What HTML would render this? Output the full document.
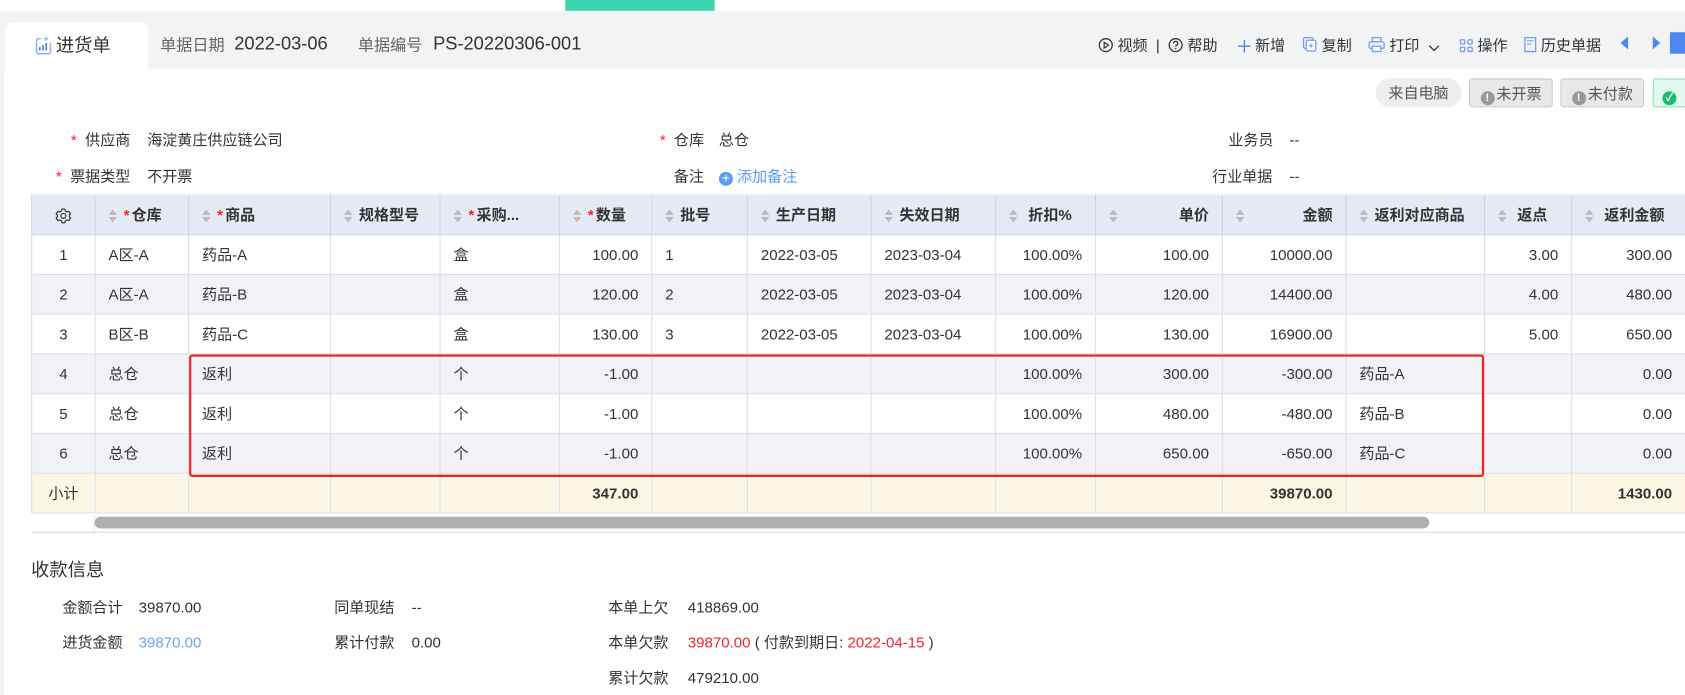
<!DOCTYPE html>
<html><head><meta charset="utf-8"><style>
html,body{margin:0;padding:0;width:1685px;height:695px;overflow:hidden;background:#fff}
#w{position:absolute;left:0;top:0;width:1568px;height:647px;transform:scale(1.07462,1.0742);transform-origin:0 0;font-family:"Liberation Sans","Noto Sans CJK SC",sans-serif;color:#333;font-size:14px;background:#fff;overflow:hidden}
.a{position:absolute;white-space:nowrap;line-height:20px}
.g{color:#666}
.r{color:#f5222d}
.tb{position:absolute;left:29px;top:181px;width:1539px;border-collapse:collapse;table-layout:fixed}
.tb td{border:1px solid #dcdfe6;border-top:none;border-bottom:1px solid #dcdfe6;height:36px;padding:0 12px;font-size:14px;overflow:hidden;white-space:nowrap;line-height:20px}
.tb tr.h td{background:#e6eaf4;height:37px;font-weight:bold;color:#333;border-color:#cfd3dc}
.tb tr.o td{background:#f0f2f7}
.tb tr.s td{background:#fcf6e4;font-weight:bold}
.R{text-align:right}
.C{text-align:center}
.ar{display:inline-block;width:8px;vertical-align:middle;margin-right:6px}
.ar:before{content:"";display:block;border:4px solid transparent;border-bottom:5px solid #bbb;border-top:none;margin-bottom:2px}
.ar:after{content:"";display:block;border:4px solid transparent;border-top:5px solid #bbb;border-bottom:none}
.st{color:#f5222d;margin-right:2px}
.tag{position:absolute;top:73px;height:27px;line-height:27px;font-size:14px;color:#555;box-sizing:border-box}
.ex{display:inline-block;width:13px;height:13px;border-radius:50%;background:#999;color:#fff;font-size:10px;line-height:13px;text-align:center;font-weight:bold;vertical-align:-2px;margin-right:2px}
.tl{color:#333;font-size:14px}
.ic{display:inline-block;vertical-align:-2px}
</style></head><body><div id="w">
<div class="a" style="left:0;top:10px;width:1568px;height:54px;background:#f2f3f5"></div>
<div class="a" style="left:0;top:64px;width:4px;height:583px;background:#f2f3f5"></div>
<div class="a" style="left:526px;top:0;width:139px;height:10px;background:#3dd6b0"></div>
<div class="a" style="left:5px;top:21px;width:133px;height:43px;background:#fff;border-radius:7px 7px 0 0"></div>
<svg class="a" style="left:33px;top:34px" width="15" height="17" viewBox="0 0 15 17"><path d="M5 2H3a2 2 0 0 0-2 2v10a2 2 0 0 0 2 2h9a2 2 0 0 0 2-2V6" fill="none" stroke="#8ab4f8" stroke-width="1.4"/><path d="M4 13v-3M7 13V8M10 13V6" stroke="#4d7ff0" stroke-width="1.6"/><path d="M10 0v4M8 2h4" stroke="#8ab4f8" stroke-width="1.2"/></svg>
<div class="a" style="left:52px;top:33px;font-size:17px">进货单</div>
<div class="a g" style="left:149px;top:33px;font-size:15px">单据日期</div>
<div class="a" style="left:218px;top:31px;font-size:17px">2022-03-06</div>
<div class="a g" style="left:333px;top:33px;font-size:15px">单据编号</div>
<div class="a" style="left:403px;top:31px;font-size:17px">PS-20220306-001</div>
<div class="a tl" style="left:1022px;top:32px"><svg class="ic" width="14" height="14" viewBox="0 0 14 14"><circle cx="7" cy="7" r="6" fill="none" stroke="#333" stroke-width="1.2"/><path d="M5.5 4.3v5.4L9.6 7z" fill="none" stroke="#333" stroke-width="1.1"/></svg> 视频 &nbsp;|&nbsp; <svg class="ic" width="14" height="14" viewBox="0 0 14 14"><circle cx="7" cy="7" r="6" fill="none" stroke="#333" stroke-width="1.2"/><path d="M5 5.5a2 2 0 1 1 2.6 1.9c-.5.2-.6.5-.6 1.1" fill="none" stroke="#333" stroke-width="1.1"/><circle cx="7" cy="10.3" r=".7" fill="#333"/></svg> 帮助</div>
<div class="a tl" style="left:1152px;top:32px"><svg class="ic" width="12" height="12" viewBox="0 0 12 12"><path d="M6 0v12M0 6h12" stroke="#4d88f0" stroke-width="1.3"/></svg> 新增</div>
<div class="a tl" style="left:1212px;top:32px"><svg class="ic" width="14" height="15" viewBox="0 0 14 15"><rect x="1" y="1" width="9" height="10" rx="1.5" fill="none" stroke="#6e9ef5" stroke-width="1.2"/><rect x="3.5" y="3.5" width="9" height="10" rx="1.5" fill="#fff" stroke="#6e9ef5" stroke-width="1.2"/><path d="M8 6.5v4M6 8.5h4" stroke="#6e9ef5" stroke-width="1.1"/></svg> 复制</div>
<div class="a tl" style="left:1273px;top:32px"><svg class="ic" width="16" height="15" viewBox="0 0 16 15"><rect x="4" y="1" width="8" height="4" fill="none" stroke="#6e9ef5" stroke-width="1.2"/><rect x="1" y="5" width="14" height="6" rx="1.5" fill="none" stroke="#6e9ef5" stroke-width="1.2"/><rect x="4" y="9" width="8" height="5" fill="#fff" stroke="#6e9ef5" stroke-width="1.2"/></svg> 打印 &nbsp;<svg class="ic" width="11" height="8" viewBox="0 0 11 8"><path d="M1 1.5l4.5 4.5L10 1.5" fill="none" stroke="#333" stroke-width="1.2"/></svg></div>
<div class="a tl" style="left:1358px;top:32px"><svg class="ic" width="13" height="13" viewBox="0 0 13 13"><g fill="none" stroke="#6e9ef5" stroke-width="1.2"><rect x="1" y="1" width="4" height="4" rx="1"/><rect x="8" y="1" width="4" height="4" rx="1"/><rect x="1" y="8" width="4" height="4" rx="1"/><rect x="8" y="8" width="4" height="4" rx="1"/></g></svg> 操作</div>
<div class="a tl" style="left:1418px;top:32px"><svg class="ic" width="12" height="15" viewBox="0 0 12 15"><path d="M1 1h10v13H1z" fill="none" stroke="#6e9ef5" stroke-width="1.2"/><path d="M3 4h6M3 7h4" stroke="#6e9ef5" stroke-width="1.1"/></svg> 历史单据</div>
<div class="a" style="left:1508px;top:34px;width:0;height:0;border:6px solid transparent;border-right:7px solid #4d88f0;border-left:none"></div>
<div class="a" style="left:1538px;top:34px;width:0;height:0;border:6px solid transparent;border-left:7px solid #4d88f0;border-right:none"></div>
<div class="a" style="left:1554px;top:30px;width:14px;height:20px;background:#4d88f0"></div>
<div class="tag" style="left:1280px;width:80px;background:#eee;border-radius:14px;text-align:center">来自电脑</div>
<div class="tag" style="left:1367px;width:78px;background:#e8e8e8;border:1px solid #ccc;border-radius:3px;text-align:center"><span class="ex">!</span>未开票</div>
<div class="tag" style="left:1452px;width:78px;background:#e8e8e8;border:1px solid #ccc;border-radius:3px;text-align:center"><span class="ex">!</span>未付款</div>
<div class="tag" style="left:1538px;width:60px;background:#e3f9ef;border:1px solid #8de0b8;border-radius:3px;padding-left:8px"><span class="ex" style="background:#19be6b">✓</span></div>
<div class="a" style="left:66px;top:120px"><span class="r">*</span>&nbsp; 供应商</div>
<div class="a" style="left:137px;top:120px">海淀黄庄供应链公司</div>
<div class="a" style="left:614px;top:120px"><span class="r">*</span>&nbsp; 仓库</div>
<div class="a" style="left:669px;top:120px">总仓</div>
<div class="a" style="left:1143px;top:120px">业务员</div>
<div class="a" style="left:1200px;top:120px">--</div>
<div class="a" style="left:52px;top:154px"><span class="r">*</span>&nbsp; 票据类型</div>
<div class="a" style="left:137px;top:154px">不开票</div>
<div class="a" style="left:627px;top:154px">备注</div>
<div class="a" style="left:669px;top:154px;color:#5b9bf0"><span style="display:inline-block;width:13px;height:13px;border-radius:50%;background:#5b9bf0;color:#fff;font-size:13px;line-height:12px;text-align:center;vertical-align:-1px">+</span> 添加备注</div>
<div class="a" style="left:1128px;top:154px">行业单据</div>
<div class="a" style="left:1200px;top:154px">--</div>

<table class="tb">
<colgroup><col style="width:59px"><col style="width:87px"><col style="width:132px"><col style="width:102px"><col style="width:111px"><col style="width:86px"><col style="width:89px"><col style="width:115px"><col style="width:116px"><col style="width:93px"><col style="width:118px"><col style="width:115px"><col style="width:129px"><col style="width:81px"><col style="width:106px"></colgroup>
<tr class="h"><td class="C"><svg width="16" height="16" viewBox="0 0 16 16" style="vertical-align:middle"><path d="M8 1.5l1.4.3.4 1.6 1.4.8 1.6-.5 1 1 .9 1.3-1.1 1.2v1.6l1.1 1.2-.9 1.3-1 1-1.6-.5-1.4.8-.4 1.6L8 14.5l-1.4-.3-.4-1.6-1.4-.8-1.6.5-1-1-.9-1.3 1.1-1.2V7.2L1.3 6l.9-1.3 1-1 1.6.5 1.4-.8.4-1.6z" fill="none" stroke="#333" stroke-width="1.1"/><circle cx="8" cy="8" r="2.3" fill="none" stroke="#333" stroke-width="1.1"/></svg></td><td><span class="ar"></span><span class="st">*</span>仓库</td><td><span class="ar"></span><span class="st">*</span>商品</td><td><span class="ar"></span>规格型号</td><td><span class="ar"></span><span class="st">*</span>采购...</td><td><span class="ar"></span><span class="st">*</span>数量</td><td><span class="ar"></span>批号</td><td><span class="ar"></span>生产日期</td><td><span class="ar"></span>失效日期</td><td><span class="ar"></span>&nbsp;折扣%</td><td><span class="ar"></span><span style="float:right">单价</span></td><td><span class="ar"></span><span style="float:right">金额</span></td><td><span class="ar"></span>返利对应商品</td><td><span class="ar"></span>&nbsp;返点</td><td><span class="ar"></span>&nbsp;返利金额</td></tr>
<tr><td class="C">1</td><td>A区-A</td><td>药品-A</td><td></td><td>盒</td><td class="R">100.00</td><td>1</td><td>2022-03-05</td><td>2023-03-04</td><td class="R">100.00%</td><td class="R">100.00</td><td class="R">10000.00</td><td></td><td class="R">3.00</td><td class="R">300.00</td></tr>
<tr class="o"><td class="C">2</td><td>A区-A</td><td>药品-B</td><td></td><td>盒</td><td class="R">120.00</td><td>2</td><td>2022-03-05</td><td>2023-03-04</td><td class="R">100.00%</td><td class="R">120.00</td><td class="R">14400.00</td><td></td><td class="R">4.00</td><td class="R">480.00</td></tr>
<tr><td class="C">3</td><td>B区-B</td><td>药品-C</td><td></td><td>盒</td><td class="R">130.00</td><td>3</td><td>2022-03-05</td><td>2023-03-04</td><td class="R">100.00%</td><td class="R">130.00</td><td class="R">16900.00</td><td></td><td class="R">5.00</td><td class="R">650.00</td></tr>
<tr class="o"><td class="C">4</td><td>总仓</td><td>返利</td><td></td><td>个</td><td class="R">-1.00</td><td></td><td></td><td></td><td class="R">100.00%</td><td class="R">300.00</td><td class="R">-300.00</td><td>药品-A</td><td></td><td class="R">0.00</td></tr>
<tr><td class="C">5</td><td>总仓</td><td>返利</td><td></td><td>个</td><td class="R">-1.00</td><td></td><td></td><td></td><td class="R">100.00%</td><td class="R">480.00</td><td class="R">-480.00</td><td>药品-B</td><td></td><td class="R">0.00</td></tr>
<tr class="o"><td class="C">6</td><td>总仓</td><td>返利</td><td></td><td>个</td><td class="R">-1.00</td><td></td><td></td><td></td><td class="R">100.00%</td><td class="R">650.00</td><td class="R">-650.00</td><td>药品-C</td><td></td><td class="R">0.00</td></tr>
<tr class="s"><td class="C" style="font-weight:normal">小计</td><td></td><td></td><td></td><td></td><td class="R">347.00</td><td></td><td></td><td></td><td></td><td></td><td class="R">39870.00</td><td></td><td></td><td class="R">1430.00</td></tr>
</table>
<div class="a" style="left:176px;top:330px;width:1201px;height:110px;border:2px solid #f02020;border-radius:3px"></div>
<div class="a" style="left:88px;top:481px;width:1242px;height:11px;background:#b0b0b0;border-radius:6px"></div>
<div class="a" style="left:87px;top:479px;width:1px;height:16px;background:#e4e4e4"></div>
<div class="a" style="left:29px;top:495px;width:1539px;height:1px;background:#ddd"></div>

<div class="a" style="left:29px;top:521px;font-size:17px">收款信息</div>
<div class="a" style="left:58px;top:555px">金额合计</div><div class="a" style="left:129px;top:555px">39870.00</div>
<div class="a" style="left:311px;top:555px">同单现结</div><div class="a" style="left:383px;top:555px">--</div>
<div class="a" style="left:566px;top:555px">本单上欠</div><div class="a" style="left:640px;top:555px">418869.00</div>
<div class="a" style="left:58px;top:588px">进货金额</div><div class="a" style="left:129px;top:588px;color:#6aa3f5">39870.00</div>
<div class="a" style="left:311px;top:588px">累计付款</div><div class="a" style="left:383px;top:588px">0.00</div>
<div class="a" style="left:566px;top:588px">本单欠款</div><div class="a" style="left:640px;top:588px"><span class="r">39870.00</span> ( 付款到期日: <span class="r">2022-04-15</span> )</div>
<div class="a" style="left:566px;top:621px">累计欠款</div><div class="a" style="left:640px;top:621px">479210.00</div>
</div></body></html>
